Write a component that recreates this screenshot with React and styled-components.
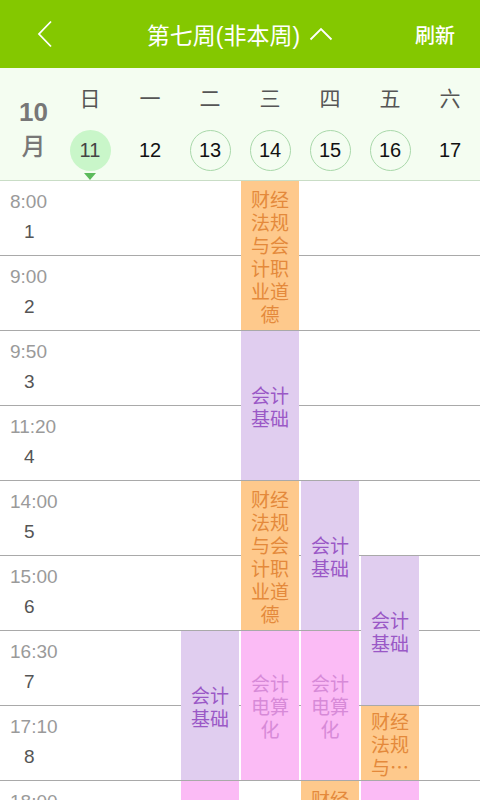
import styled, { createGlobalStyle } from 'styled-components'

const GlobalStyle = createGlobalStyle`
  html, body {
    margin: 0;
    padding: 0;
    background: #fff;
  }
  body {
    font-family: "Liberation Sans", "Noto Sans CJK SC", sans-serif;
  }
`

const Page = styled.div`
  width: 480px;
  height: 800px;
  overflow: hidden;
  display: flex;
  flex-direction: column;
`

const TopBar = styled.div`
  flex-shrink: 0;
  height: 68px;
  background: #84c800;
  color: #fff;
  display: grid;
  grid-template-columns: 90px 1fr 90px;
  align-items: center;
`

const BackButton = styled.div`
  display: flex;
  align-items: center;
  padding-left: 37px;
`

const Title = styled.div`
  display: flex;
  align-items: center;
  justify-content: center;
  gap: 9px;
  font-family: "Liberation Sans", "Noto Sans CJK SC", sans-serif;
  font-size: 23px;
`

const Refresh = styled.div`
  text-align: right;
  padding-right: 25px;
  font-family: "Noto Sans CJK SC", sans-serif;
  font-size: 20px;
  font-weight: 500;
`

const DayHeader = styled.div`
  flex-shrink: 0;
  display: grid;
  grid-template-columns: 60px repeat(7, 60px);
  grid-template-rows: 55px 57px;
  background: #f4fdf1;
  border-bottom: 1px solid #c9ddc6;
`

const MonthCell = styled.div`
  grid-row: 1 / span 2;
  display: flex;
  flex-direction: column;
  align-items: center;
  gap: 3px;
  padding: 29px 0 0 7px;
  color: #777;
`

const MonthNum = styled.span`
  font-size: 26px;
  font-weight: bold;
  line-height: 30px;
`

const MonthWord = styled.span`
  font-family: "Noto Sans CJK SC", sans-serif;
  font-size: 24px;
  font-weight: 500;
  line-height: 30px;
`

const DayName = styled.div`
  display: flex;
  align-items: center;
  justify-content: center;
  padding-top: 2px;
  font-family: "Noto Sans CJK SC", sans-serif;
  font-size: 21px;
  color: #555;
`

const DateCell = styled.div`
  display: flex;
  flex-direction: column;
  align-items: center;
  padding-top: 7px;
`

const DateCircle = styled.div`
  width: 41px;
  height: 41px;
  box-sizing: border-box;
  border-radius: 50%;
  display: flex;
  align-items: center;
  justify-content: center;
  font-size: 20px;
  color: ${(p) => (p.today ? '#444' : '#111')};
  background: ${(p) => (p.today ? '#c9f6c9' : 'transparent')};
  border: 1px solid ${(p) => (p.marked ? '#a9d8aa' : 'transparent')};
`

const TodayMark = styled.div`
  margin-top: 2px;
  width: 0;
  height: 0;
  border-left: 6px solid transparent;
  border-right: 6px solid transparent;
  border-top: 7px solid #5cba5c;
`

const Schedule = styled.div`
  display: grid;
  grid-template-columns: 60px repeat(7, 60px);
  grid-auto-rows: 75px;
`

const RowLine = styled.div`
  grid-column: 1 / -1;
  grid-row: ${(p) => p.row};
  border-bottom: 1px solid #a9a9a9;
`

const TimeCell = styled.div`
  grid-column: 1;
  grid-row: ${(p) => p.row};
  display: flex;
  flex-direction: column;
  padding: 10px 0 0 10px;
`

const TimeText = styled.span`
  font-size: 19px;
  line-height: 22px;
  color: #9a9a9a;
`

const PeriodText = styled.span`
  margin-top: 8px;
  padding-left: 14px;
  font-size: 19px;
  line-height: 22px;
  color: #555;
`

const palette = {
  orange: { bg: '#fec98c', fg: '#e4893b' },
  purple: { bg: '#e0cdef', fg: '#9a58c6' },
  pink: { bg: '#fbbbf5', fg: '#d78ad8' },
}

const Course = styled.div`
  grid-column: ${(p) => p.day + 2};
  grid-row: ${(p) => p.row} / span ${(p) => p.span};
  margin: 0 1px 1px 1px;
  z-index: 1;
  display: flex;
  align-items: center;
  justify-content: center;
  padding: 0 9px;
  background: ${(p) => palette[p.kind].bg};
  color: ${(p) => palette[p.kind].fg};
`

const CourseName = styled.span`
  font-family: "Noto Sans CJK SC", sans-serif;
  font-size: 19px;
  line-height: 23px;
  text-align: center;
  display: -webkit-box;
  -webkit-box-orient: vertical;
  -webkit-line-clamp: ${(p) => p.lines};
  overflow: hidden;
  width: 40px;
`

const days = [
  { name: '日', date: 11, today: true },
  { name: '一', date: 12 },
  { name: '二', date: 13, marked: true },
  { name: '三', date: 14, marked: true },
  { name: '四', date: 15, marked: true },
  { name: '五', date: 16, marked: true },
  { name: '六', date: 17 },
]

const times = ['8:00', '9:00', '9:50', '11:20', '14:00', '15:00', '16:30', '17:10', '18:00', '19:00']

const LAW = '财经法规与会计职业道德'
const BASE = '会计基础'
const PC = '会计电算化'

const courses = [
  { day: 3, row: 1, span: 2, kind: 'orange', name: LAW },
  { day: 3, row: 3, span: 2, kind: 'purple', name: BASE },
  { day: 3, row: 5, span: 2, kind: 'orange', name: LAW },
  { day: 3, row: 7, span: 2, kind: 'pink', name: PC },
  { day: 4, row: 5, span: 2, kind: 'purple', name: BASE },
  { day: 4, row: 7, span: 2, kind: 'pink', name: PC },
  { day: 4, row: 9, span: 2, kind: 'orange', name: LAW },
  { day: 5, row: 6, span: 2, kind: 'purple', name: BASE },
  { day: 5, row: 8, span: 1, kind: 'orange', name: LAW },
  { day: 5, row: 9, span: 2, kind: 'pink', name: PC },
  { day: 2, row: 7, span: 2, kind: 'purple', name: BASE },
  { day: 2, row: 9, span: 2, kind: 'pink', name: PC },
]

function BackIcon() {
  return (
    <svg width="16" height="28" viewBox="0 0 16 28">
      <polyline points="14,1.5 2,14 14,26.5" fill="none" stroke="#fff" strokeWidth="1.8" />
    </svg>
  )
}

function UpIcon() {
  return (
    <svg width="24" height="14" viewBox="0 0 24 14">
      <polyline points="1.5,12.5 12,2 22.5,12.5" fill="none" stroke="#fff" strokeWidth="1.8" />
    </svg>
  )
}

export default function App() {
  return (
    <Page>
      <GlobalStyle />
      <TopBar>
        <BackButton>
          <BackIcon />
        </BackButton>
        <Title>
          <span>第七周(非本周)</span>
          <UpIcon />
        </Title>
        <Refresh>刷新</Refresh>
      </TopBar>

      <DayHeader>
        <MonthCell>
          <MonthNum>10</MonthNum>
          <MonthWord>月</MonthWord>
        </MonthCell>
        {days.map((d) => (
          <DayName key={`name-${d.name}`}>{d.name}</DayName>
        ))}
        {days.map((d) => (
          <DateCell key={`date-${d.date}`}>
            <DateCircle today={d.today} marked={d.marked}>
              {d.date}
            </DateCircle>
            {d.today && <TodayMark />}
          </DateCell>
        ))}
      </DayHeader>

      <Schedule>
        {times.map((t, i) => (
          <RowLine key={`line-${t}`} row={i + 1} />
        ))}
        {times.map((t, i) => (
          <TimeCell key={`time-${t}`} row={i + 1}>
            <TimeText>{t}</TimeText>
            <PeriodText>{i + 1}</PeriodText>
          </TimeCell>
        ))}
        {courses.map((c) => (
          <Course key={`${c.day}-${c.row}`} day={c.day} row={c.row} span={c.span} kind={c.kind}>
            <CourseName lines={Math.floor((c.span * 75 - 4) / 23)}>{c.name}</CourseName>
          </Course>
        ))}
      </Schedule>
    </Page>
  )
}
